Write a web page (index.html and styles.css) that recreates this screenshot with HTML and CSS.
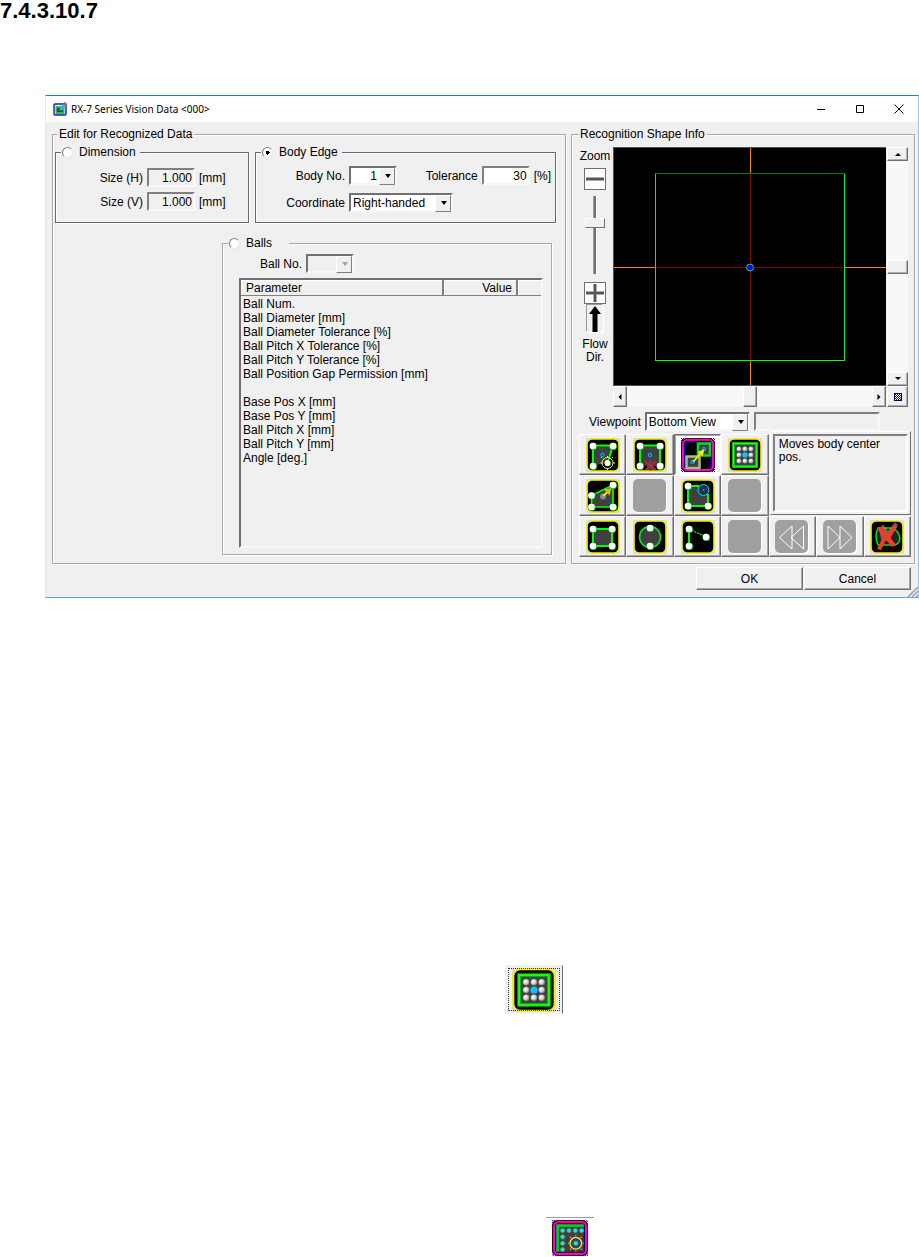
FILE: index.html
```
<!DOCTYPE html>
<html lang="en">
<head>
<meta charset="utf-8">
<title>RX-7 Series Vision Data</title>
<link rel="stylesheet" href="styles.css">
</head>
<body>
<svg class="defs" aria-hidden="true">
  <defs>
    <pattern id="dither" width="2" height="2" patternUnits="userSpaceOnUse">
      <rect width="2" height="2" fill="#fff"/><rect width="1" height="1" fill="#208"/><rect x="1" y="1" width="1" height="1" fill="#208"/>
    </pattern>
    <pattern id="bits" width="2" height="2" patternUnits="userSpaceOnUse">
      <rect width="1" height="1" fill="#222"/><rect x="1" y="1" width="1" height="1" fill="#222"/>
    </pattern>
    <radialGradient id="ball" cx=".4" cy=".4" r=".6"><stop offset="0" stop-color="#fff"/><stop offset=".6" stop-color="#ccc"/><stop offset="1" stop-color="#777"/></radialGradient>
    <symbol id="frame" viewBox="0 0 34 34">
      <rect width="34" height="34" fill="#dcdcdc"/>
      <rect x="1" y="1" width="32" height="32" rx="5" fill="#000" stroke="#f4f000" stroke-width="1.6"/>
    </symbol>
    <symbol id="frame-on" viewBox="0 0 34 34">
      <path d="M0 0H6V6H0zM28 0H34V6H28zM0 28H6V34H0zM28 28H34V34H28z" fill="url(#dither)"/>
      <rect x=".5" y=".5" width="33" height="33" rx="5" fill="#000" stroke="#301"/>
      <rect x="2" y="2" width="30" height="30" rx="4" fill="none" stroke="#f0c" stroke-width="2"/>
      <path d="M4 30V4H30V30" fill="none" stroke="#00f"/>
      <path d="M4 2.5H30" stroke="#f03"/>
    </symbol>
    <symbol id="off" viewBox="0 0 34 34">
      <rect x="1" y="1" width="33" height="33" rx="5" fill="#fff"/><rect width="33" height="33" rx="5" fill="#a0a0a0"/>
    </symbol>
    <symbol id="node" viewBox="0 0 8 8">
      <circle cx="4.4" cy="4.4" r="3.6" fill="#00c020"/><circle cx="4" cy="4" r="3.3" fill="#fff"/>
    </symbol>
    <symbol id="dot" viewBox="0 0 6 6"><circle cx="3" cy="3" r="1.5" fill="#023" stroke="#00a8ff" stroke-width="1.3"/></symbol>
    <symbol id="grid" viewBox="0 0 34 34">
      <use href="#frame"/>
      <rect x="5.500" y="5.500" width="23" height="23" fill="#404040" stroke="#0a2" stroke-width="3"/>
      <rect x="5.500" y="5.500" width="23" height="23" fill="none" stroke="#2f0" stroke-width="1.400"/>
      <g fill="url(#ball)"><circle cx="11" cy="11" r="2.500"/><circle cx="17" cy="11" r="2.500"/><circle cx="23" cy="11" r="2.500"/><circle cx="11" cy="17" r="2.500"/><circle cx="23" cy="17" r="2.500"/><circle cx="11" cy="23" r="2.500"/><circle cx="17" cy="23" r="2.500"/><circle cx="23" cy="23" r="2.500"/></g>
      <circle cx="17" cy="17" r="2.800" fill="#10bfff"/>
    </symbol>
  </defs>
</svg>

<h1 class="section-no">7.4.3.10.7</h1>

<main class="window">
  <header class="titlebar">
    <svg class="app-icon" viewBox="0 0 14 14" aria-hidden="true"><rect x="1" y="2" width="12" height="11" rx="1" fill="#e8f4ff" stroke="#1020c0" stroke-width="1.400"/><rect x="2.500" y="4" width="9" height="8" fill="#40b840"/><path d="M4 6v4h6V8H7V6z" fill="#086020"/><path d="M6 8 10 2l3 2-5 5z" fill="#40a8f0"/><path d="m10 1 2-1 2 2-1 2z" fill="#e05030"/></svg>
    <span class="caption">RX-7 Series Vision Data &lt;000&gt;</span>
    <button class="win-btn" aria-label="Minimize"><svg viewBox="0 0 10 10"><path d="M1 5.500H9"/></svg></button>
    <button class="win-btn" aria-label="Maximize"><svg viewBox="0 0 10 10"><path d="M1.500 1.500h7v7h-7z"/></svg></button>
    <button class="win-btn" aria-label="Close"><svg viewBox="0 0 10 10"><path d="m.5.5 9 9M9.500.5l-9 9"/></svg></button>
  </header>

  <div class="panes">
    <fieldset class="group edit">
      <legend>Edit for Recognized Data</legend>
      <div class="top-row">
        <fieldset class="group dark dimension">
          <legend><input type="radio" name="mode" id="m-dim"><label for="m-dim">Dimension</label></legend>
          <div class="line"><label for="size-h">Size (H)</label><input class="field off" id="size-h" value="1.000" readonly><span>[mm]</span></div>
          <div class="line"><label for="size-v">Size (V)</label><input class="field off" id="size-v" value="1.000" readonly><span>[mm]</span></div>
        </fieldset>
        <fieldset class="group dark body-edge">
          <legend><input type="radio" name="mode" id="m-body" checked><label for="m-body">Body Edge</label></legend>
          <div class="line">
            <label class="lead" for="body-no">Body No.</label>
            <span class="combo small"><select id="body-no"><option>1</option></select></span>
            <label class="tol" for="tol">Tolerance</label><input class="field" id="tol" value="30"><span>[%]</span>
          </div>
          <div class="line">
            <label class="lead" for="coord">Coordinate</label>
            <span class="combo wide"><select id="coord"><option>Right-handed</option></select></span>
          </div>
        </fieldset>
      </div>
      <fieldset class="group balls">
        <legend><input type="radio" name="mode" id="m-balls"><label for="m-balls">Balls</label></legend>
        <div class="line"><label for="ball-no">Ball No.</label><span class="combo small off"><select id="ball-no" disabled><option></option></select></span></div>
        <div class="list">
          <table>
            <thead><tr><th class="c-name">Parameter</th><th class="c-value">Value</th><th class="c-rest"></th></tr></thead>
            <tbody>
              <tr><td colspan="3">Ball Num.</td></tr>
              <tr><td colspan="3">Ball Diameter [mm]</td></tr>
              <tr><td colspan="3">Ball Diameter Tolerance [%]</td></tr>
              <tr><td colspan="3">Ball Pitch X Tolerance [%]</td></tr>
              <tr><td colspan="3">Ball Pitch Y Tolerance [%]</td></tr>
              <tr><td colspan="3">Ball Position Gap Permission [mm]</td></tr>
              <tr><td colspan="3"></td></tr>
              <tr><td colspan="3">Base Pos X [mm]</td></tr>
              <tr><td colspan="3">Base Pos Y [mm]</td></tr>
              <tr><td colspan="3">Ball Pitch X [mm]</td></tr>
              <tr><td colspan="3">Ball Pitch Y [mm]</td></tr>
              <tr><td colspan="3">Angle [deg.]</td></tr>
            </tbody>
          </table>
        </div>
      </fieldset>
    </fieldset>

    <fieldset class="group shape">
      <legend>Recognition Shape Info</legend>
      <div class="viewer">
        <div class="zoom">
          <label for="zoom">Zoom</label>
          <button class="zoom-btn" aria-label="Zoom out"><svg viewBox="0 0 20 20"><path d="M1 10h18" stroke="#aaa" stroke-width="4"/><path d="M1 10h18" stroke="#555" stroke-width="2"/></svg></button>
          <input type="range" id="zoom" min="0" max="100" value="68">
          <button class="zoom-btn" aria-label="Zoom in"><svg viewBox="0 0 20 20"><path d="M1 10h18M10 1v18" stroke="#aaa" stroke-width="4"/><path d="M1 10h18M10 1v18" stroke="#555" stroke-width="2"/></svg></button>
          <svg class="flow-arrow" viewBox="0 0 16 27"><path d="M8 1 14 9H10.500V27H5.500V9H2z"/></svg>
          <span class="flow">Flow<br>Dir.</span>
        </div>
        <div class="view">
          <svg viewBox="0 0 273 239" preserveAspectRatio="none" shape-rendering="crispEdges">
            <rect width="273" height="239" fill="#000"/>
            <g fill="none"><path d="M136.500 0V25M136.500 214V239M0 120.500H41M231 120.500H273" stroke="#ff8000"/>
            <path d="M136.500 25V214M41 120.500H231" stroke="#800000"/>
            <path d="M41.500 25V214.500H231.500V25" stroke="#0f0"/><path d="M41 25.500H232" stroke="#008000"/></g>
            <circle cx="136.500" cy="120.500" r="3.500" fill="#00f" stroke="#00e040" shape-rendering="auto"/>
          </svg>
        </div>
        <div class="scroll vert">
          <button aria-label="Up"><svg viewBox="0 0 6 6"><path d="M0 5 3 2l3 3z"/></svg></button><span class="thumb"></span><button aria-label="Down"><svg viewBox="0 0 6 6"><path d="M0 1h6L3 4z"/></svg></button>
        </div>
        <div class="scroll horz">
          <button aria-label="Left"><svg viewBox="0 0 6 6"><path d="M4.500 0v6l-3-3z"/></svg></button><span class="thumb"></span><button aria-label="Right"><svg viewBox="0 0 6 6"><path d="M1.500 0v6l3-3z"/></svg></button>
        </div>
        <button class="corner" aria-label="Center view"><svg viewBox="0 0 8 8"><rect width="8" height="8" fill="#fff"/><rect width="8" height="8" fill="url(#bits)"/><rect x=".5" y=".5" width="7" height="7" fill="none" stroke="#006"/></svg></button>
      </div>
      <div class="line viewpoint">
        <label for="viewpoint">Viewpoint</label>
        <span class="combo"><select id="viewpoint"><option>Bottom View</option></select></span>
        <input class="field off" aria-label="View state" readonly>
      </div>
      <div class="tools">
        <button aria-label="Move vertex"><svg viewBox="0 0 34 34"><use href="#frame"/><path d="M7 7.500H27L21.500 25 7 27.500z" fill="#404040"/><path d="M7 27.500V7.500H27L22.500 22" fill="none" stroke="#0f0" stroke-width="2"/><use href="#dot" x="13.500" y="14" width="6" height="6"/><use href="#node" x="3" y="4" width="8" height="8"/><use href="#node" x="23" y="4" width="8" height="8"/><use href="#node" x="3" y="24" width="8" height="8"/><use href="#node" x="18" y="21.500" width="7" height="7"/><circle cx="21.500" cy="25" r="5.500" fill="none" stroke="#ffe850"/><path d="M21.500 18v1.500M21.500 30.500V32M14.500 25h1.500M27 25h2M26 20l1-1M16 20l-1-1" stroke="#ffe850"/></svg></button>
        <button aria-label="Delete vertex"><svg viewBox="0 0 34 34"><use href="#frame"/><path d="M7 7.500H27V27.500H7z" fill="#404040"/><path d="M7 27.500V7.500H27V27.500" fill="none" stroke="#0f0" stroke-width="2"/><use href="#dot" x="14" y="14" width="6" height="6"/><use href="#node" x="3" y="4" width="8" height="8"/><use href="#node" x="23" y="4" width="8" height="8"/><use href="#node" x="3" y="24" width="8" height="8"/><use href="#node" x="23" y="24" width="8" height="8"/><rect x="14" y="23" width="7" height="9" fill="#255"/><path d="m12 23 11 9M23 23l-11 9" stroke="#f01030" stroke-width="1.600"/><path d="M12 27.500h11M17.500 22v11" stroke="#f01030" stroke-dasharray="1 1"/></svg></button>
        <button class="on" aria-label="Move body center" aria-pressed="true"><svg viewBox="0 0 34 34"><use href="#frame-on"/><path d="M17 5.500H29V17.500H17z" fill="#404040" stroke="#0d2" stroke-width="2.500"/><path d="M5.500 18.500H18.500V30H5.500z" fill="#404040" stroke="#9cc47c" stroke-width="2.500"/><use href="#dot" x="8.500" y="21" width="6" height="6"/><use href="#dot" x="20" y="8" width="6" height="6"/><path d="M12 24 20 15" stroke="#fe0" stroke-width="1.800"/><path d="m23.500 11-7 3 5 4.500z" fill="#fe0"/></svg></button>
        <button aria-label="Ball grid"><svg viewBox="0 0 34 34"><use href="#grid"/></svg></button>
        <div class="hint"><p>Moves body center pos.</p></div>
        <button aria-label="Rotate body"><svg viewBox="0 0 34 34"><use href="#frame"/><path d="M27 6 5.500 16.500V28H27z" fill="#404040" stroke="#0f0" stroke-width="1.700"/><path d="M5.500 16.500H17L27 28" fill="none" stroke="#0a6040" stroke-width="1.500"/><circle cx="17" cy="17.500" r="3" fill="#888"/><use href="#node" x="23" y="2" width="8" height="8"/><use href="#node" x="1.500" y="12.500" width="8" height="8"/><use href="#node" x="1.500" y="24" width="8" height="8"/><use href="#node" x="23" y="24" width="8" height="8"/><path d="M17 17 22 12.500" stroke="#fe0" stroke-width="1.700"/><path d="m25.500 9-7.500 1.500 5.500 6z" fill="#cb2"/></svg></button>
        <button aria-label="Unavailable" disabled><svg viewBox="0 0 34 34"><use href="#off"/></svg></button>
        <button aria-label="Round corner"><svg viewBox="0 0 34 34"><use href="#frame"/><path d="M7 7H20L27 14V27H7z" fill="#404040"/><path d="M18 7H7V27H27V15" fill="none" stroke="#0f0" stroke-width="2"/><use href="#node" x="3" y="3" width="8" height="8"/><use href="#node" x="3" y="23" width="8" height="8"/><use href="#node" x="23" y="23" width="8" height="8"/><circle cx="22.500" cy="11" r="5.500" fill="#234" stroke="#0df"/><circle cx="22.500" cy="11" r="1" fill="#09f"/></svg></button>
        <button aria-label="Unavailable" disabled><svg viewBox="0 0 34 34"><use href="#off"/></svg></button>
        <button aria-label="Rectangle"><svg viewBox="0 0 34 34"><use href="#frame"/><path d="M7 9H26V26H7z" fill="#404040" stroke="#0f0" stroke-width="2"/><use href="#node" x="3" y="5" width="8" height="8"/><use href="#node" x="22" y="5" width="8" height="8"/><use href="#node" x="3" y="22" width="8" height="8"/><use href="#node" x="22" y="22" width="8" height="8"/></svg></button>
        <button aria-label="Circle"><svg viewBox="0 0 34 34"><use href="#frame"/><circle cx="17" cy="17" r="10.500" fill="#404040" stroke="#0e2" stroke-width="1.500"/><use href="#node" x="13" y="4" width="8" height="8"/><use href="#node" x="13" y="22" width="8" height="8"/></svg></button>
        <button aria-label="Polyline"><svg viewBox="0 0 34 34"><use href="#frame"/><path d="M8 9V26" stroke="#0f0" stroke-width="2"/><path d="M8 9 25 17" stroke="#0f0" stroke-width="1.200" stroke-dasharray="2 1"/><use href="#node" x="4" y="5" width="8" height="8"/><use href="#node" x="4" y="22" width="8" height="8"/><use href="#node" x="21" y="13" width="8" height="8"/></svg></button>
        <button aria-label="Unavailable" disabled><svg viewBox="0 0 34 34"><use href="#off"/></svg></button>
        <button aria-label="Undo" disabled><svg viewBox="0 0 34 34"><use href="#off"/><path d="M17 6V29L4.500 17.500zM28.500 6V29L16 17.500z" fill="none" stroke="#fff"/></svg></button>
        <button aria-label="Redo" disabled><svg viewBox="0 0 34 34"><use href="#off"/><path d="M5 6V29L17 17.500zM17 6V29L29 17.500z" fill="none" stroke="#fff"/></svg></button>
        <button aria-label="Clear"><svg viewBox="0 0 34 34"><use href="#frame"/><path d="M8 8Q4 16 8 25H25Q32 22 29 15 27 9 20 8z" fill="#222" stroke="#0d2" stroke-width="1.500"/><path d="m9 10 4-6 5 7 7-9 3 3-8 14-8 3z" fill="#999" opacity=".6"/><path d="M7 8Q12 5 14 9L17 14 23 6Q25 4 27 7L20 17 26 25 22 27 16 20 11 30 7 29 13 17z" fill="#f03c20"/></svg></button>
      </div>
    </fieldset>
  </div>

  <footer class="actions">
    <button>OK</button><button>Cancel</button>
    <svg class="grip" viewBox="0 0 10 10" aria-hidden="true"><path d="M0 10 10 0M4 10l6-6M8 10l2-2" stroke="#999" stroke-width="1.400"/></svg>
  </footer>
</main>

<div class="figure one"><button class="sample" aria-label="Ball grid"><svg viewBox="0 0 34 34"><use href="#grid"/></svg></button></div>
<div class="figure two"><button class="sample-on" aria-label="Ball layout"><svg viewBox="0 0 34 34"><use href="#frame-on"/><path d="M5.500 30V5.500H30" fill="none" stroke="#0c2" stroke-width="3"/><rect x="7" y="7" width="23" height="23" fill="#404040"/><g fill="#0ef" stroke="#885" stroke-width=".6"><circle cx="10" cy="10" r="2"/><circle cx="16" cy="10" r="2"/><circle cx="22" cy="10" r="2"/><circle cx="28" cy="10" r="2"/><circle cx="10" cy="16" r="2"/><circle cx="10" cy="22" r="2"/><circle cx="10" cy="28" r="2"/></g><circle cx="22.500" cy="22" r="5.500" fill="none" stroke="#ffe850" stroke-width="1.200"/><circle cx="22.500" cy="22" r="2.200" fill="#0df"/><path d="M22.500 14v1M22.500 29v1M15 22h1M29 22h1M17 16l1 1M28 16l-1 1M17 28l1-1M28 28l-1-1" stroke="#cc4"/></svg></button></div>
</body>
</html>
```
FILE: styles.css
```
* { box-sizing: border-box; }
body {
  margin: 0;
  background: #fff;
  color: #000;
  font: 12px/14px "Liberation Sans", Arial, sans-serif;
}
button, input, select { font: inherit; color: inherit; margin: 0; padding: 0; border-radius: 0; }
svg { display: block; }
.defs { position: absolute; width: 0; height: 0; }

.section-no { margin: 0 0 73px; font-size: 22px; line-height: 22px; }

/* Window frame */
.window {
  margin-left: 45px;
  background: #f0f0f0;
  border: 1px solid #9cc8ec;
  border-top-color: #1a7fd4;
  border-left-color: #dce8f4;
  border-bottom-color: #5aa8e0;
}
.titlebar { display: flex; align-items: center; height: 26px; padding-left: 7px; background: #fff; }
.app-icon { width: 14px; height: 14px; margin-right: 4px; }
.caption { flex: 1; font: 10px/14px "Noto Sans", sans-serif; }
.win-btn { width: 39px; height: 26px; border: 0; background: none; display: grid; place-items: center; }
.win-btn svg { width: 10px; height: 10px; fill: none; stroke: #000; }
.panes { display: flex; gap: 5px; padding: 4px 3px 0 6px; }

/* Group boxes */
.group {
  min-width: 0;
  margin: 0;
  padding: 0;
  border: 1px solid #a8a8a8;
  box-shadow: 1px 1px 0 #fff, inset 1px 1px 0 #fff;
}
.group.dark { border-color: #696969; }
legend {
  display: flex;
  align-items: center;
  height: 16px;
  margin-left: 3px;
  padding: 0 2px;
  background: #f0f0f0;
}
.edit { flex: 1; padding: 2px 9px 8px 2px; }
.edit > legend { margin-left: 2px; }
.edit .group legend { gap: 6px; margin-left: 5px; padding: 0 4px 0 1px; }
.shape { flex: 0 0 344px; padding: 5px 3px 4px 6px; }
.shape > legend { margin-left: 0; }
.top-row { display: grid; grid-template-columns: 194fr 301fr; gap: 6px; margin-bottom: 12px; }

input[type="radio"] {
  appearance: none;
  width: 11px;
  height: 11px;
  border: 1px solid;
  border-color: #808080 #e8e8e8 #e8e8e8 #808080;
  border-radius: 50%;
  background: #fff;
}
input[type="radio"]:checked { background: radial-gradient(#000 0 2px, #fff 2px); }

.line { display: flex; align-items: center; height: 19px; gap: 4px; white-space: nowrap; }
.field {
  width: 48px;
  height: 19px;
  padding-right: 1px;
  border: 2px solid;
  border-color: #808080 #f8f8f8 #f8f8f8 #808080;
  background: #fff;
  text-align: right;
}
.field.off { background: #f0f0f0; }
.dimension { padding: 8px 0 11px; }
.dimension .line + .line { margin-top: 5px; }
.dimension .line label { width: 87px; text-align: right; }
.body-edge { padding: 6px 0; }
.body-edge .line + .line { margin-top: 8px; }
.lead { width: 89px; text-align: right; }
.tol { margin-left: auto; }
.body-edge .line > span:last-child:not(.combo) { margin-right: 4px; }

/* Drop-downs */
.combo { position: relative; height: 19px; border: 2px solid; border-color: #707070 #f8f8f8 #f8f8f8 #707070; background: #fff; }
.combo select { display: block; appearance: none; width: 100%; height: 15px; padding: 0 18px 0 2px; border: 0; background: none; opacity: 1; }
.combo::before {
  content: "";
  position: absolute;
  top: 0;
  right: 0;
  width: 14px;
  height: 15px;
  border: 1px solid;
  border-color: #fff #808080 #808080 #fff;
  background: #f0f0f0;
  pointer-events: none;
}
.combo::after {
  content: "";
  position: absolute;
  top: 6px;
  right: 4px;
  border: 3px solid transparent;
  border-top: 4px solid #000;
  border-bottom: 0;
  pointer-events: none;
}
.combo.off { background: #f0f0f0; }
.combo.off::after { border-top-color: #a0a0a0; }
.combo.small { width: 48px; }
.combo.small select { text-align-last: right; }
.combo.wide { width: 104px; }

/* Balls */
.balls { margin: 0 4px 0 167px; padding: 3px 0 6px; }
.edit .balls legend { padding-right: 17px; }
.balls .line { margin: 0 0 5px 37px; }
.list {
  height: 270px;
  margin: 0 8px 0 16px;
  border: 2px solid;
  border-color: #707070 #f8f8f8 #f8f8f8 #707070;
}
table { width: 100%; border-collapse: separate; border-spacing: 0; table-layout: fixed; }
th {
  height: 16px;
  padding: 0 4px 0 5px;
  border: solid #808080;
  border-width: 0 2px 1px 0;
  box-shadow: inset 1px 1px 0 #fff;
  font-weight: normal;
  text-align: left;
}
.c-value { width: 74px; text-align: right; }
.c-rest { width: 23px; border-right: 0; }
td { height: 14px; padding: 0 2px; white-space: nowrap; }
tbody tr:first-child td { height: 15px; padding-top: 1px; }

/* Shape viewer */
.viewer { display: grid; grid-template-columns: 34px 1fr 21px; grid-template-rows: 239px 21px; column-gap: 1px; margin-right: 3px; }
.zoom { grid-row: 1 / 3; display: flex; flex-direction: column; align-items: center; padding-top: 2px; }
.zoom-btn { width: 22px; height: 22px; border: 1px solid #707070; background: #fff; }
.zoom > label { margin-bottom: 5px; }
.zoom-btn svg { width: 20px; height: 20px; }
.zoom input {
  appearance: none;
  writing-mode: vertical-lr;
  direction: rtl;
  width: 22px;
  height: 78px;
  margin: 6px 0 8px;
  background: linear-gradient(90deg, transparent 9px, #a0a0a0 9px 10px, #707070 10px 12px, #fff 12px 13px, transparent 13px);
}
.zoom input::-webkit-slider-thumb {
  appearance: none;
  width: 20px;
  height: 10px;
  border: 1px solid;
  border-color: #fff #707070 #707070 #fff;
  background: #f0f0f0;
}
.flow-arrow { width: 16px; height: 27px; margin: 1px 0 6px; background: #f0f0f0; box-shadow: -1px -1px 0 #999, 1px 1px 0 #fff; }
.flow { line-height: 13px; text-align: center; }
.view { border: 1px solid #505050; border-width: 1px 0 1px 1px; min-width: 0; }
.view svg { width: 100%; height: 100%; }
.scroll { display: flex; justify-content: space-between; background: #f8f8f8; }
.scroll.vert { flex-direction: column; }
.scroll.horz { grid-column: 2; }
.scroll button, .thumb, .corner {
  display: grid;
  place-items: center;
  border: 1px solid;
  border-color: #fff #707070 #707070 #fff;
  box-shadow: inset -1px -1px 0 #b0b0b0;
  background: #f0f0f0;
}
.scroll svg { width: 6px; height: 6px; }
.vert > * { height: 14px; width: 100%; }
.horz > * { width: 14px; height: 100%; }
.corner svg { width: 8px; height: 8px; }

.viewpoint { margin: 5px 0 3px; padding: 0 31px 0 11px; }
.viewpoint .combo { flex: 0 0 105px; }
.viewpoint .field { flex: 1; min-width: 0; }

/* Tool palette */
.tools { display: grid; grid-template-columns: repeat(7, 1fr); grid-auto-rows: 41px; margin-left: 1px; }
.tools button {
  display: grid;
  place-items: center;
  border: 1px solid;
  border-color: #fff #707070 #707070 #fff;
  box-shadow: inset -1px -1px 0 #a8a8a8;
  background: #f0f0f0;
}
.tools button.on { border-color: #707070 #fff #fff #707070; background: #fff; box-shadow: inset 1px 1px 0 #a8a8a8; }
.tools svg { width: 34px; height: 34px; }
.hint {
  grid-column: 5 / 8;
  grid-row: 1 / 3;
  margin: -3px 0 1px 1px;
  padding: 2px;
  border: 1px solid;
  border-color: #fff #707070 #707070 #fff;
}
.hint p { height: 100%; margin: 0; padding: 2px 4px; border: 2px solid; border-color: #808080 #fff #fff #808080; line-height: 13px; }

/* Footer */
.actions { display: flex; justify-content: flex-end; align-items: flex-start; gap: 1px; padding-top: 3px; }
.actions button {
  width: 107px;
  height: 23px;
  margin-bottom: 7px;
  border: 1px solid;
  border-color: #fff #707070 #707070 #fff;
  box-shadow: inset -1px -1px 0 #a8a8a8;
  background: #f0f0f0;
}
.actions .grip { align-self: flex-end; width: 10px; height: 10px; margin-left: -4px; fill: none; }

/* Sample buttons below the window */
.figure { display: flex; justify-content: center; }
.figure.one { margin-top: 367px; padding-left: 149px; }
.figure.two { margin-top: 203px; padding-left: 221px; }
.sample, .sample-on { display: grid; place-items: center; }
.sample {
  width: 58px;
  height: 49px;
  border: 1px solid;
  border-color: #f0f0f0 #707070 #f0f0f0 #f0f0f0;
  background: #f0f0f0;
  outline: 1px dotted #333;
  outline-offset: -4px;
}
.sample svg { width: 44px; height: 44px; }
.sample-on { width: 48px; height: 40px; border: 0; border-top: 1px solid #a0a0a0; background: #fff; }
.sample-on svg { width: 36px; height: 36px; }
```
